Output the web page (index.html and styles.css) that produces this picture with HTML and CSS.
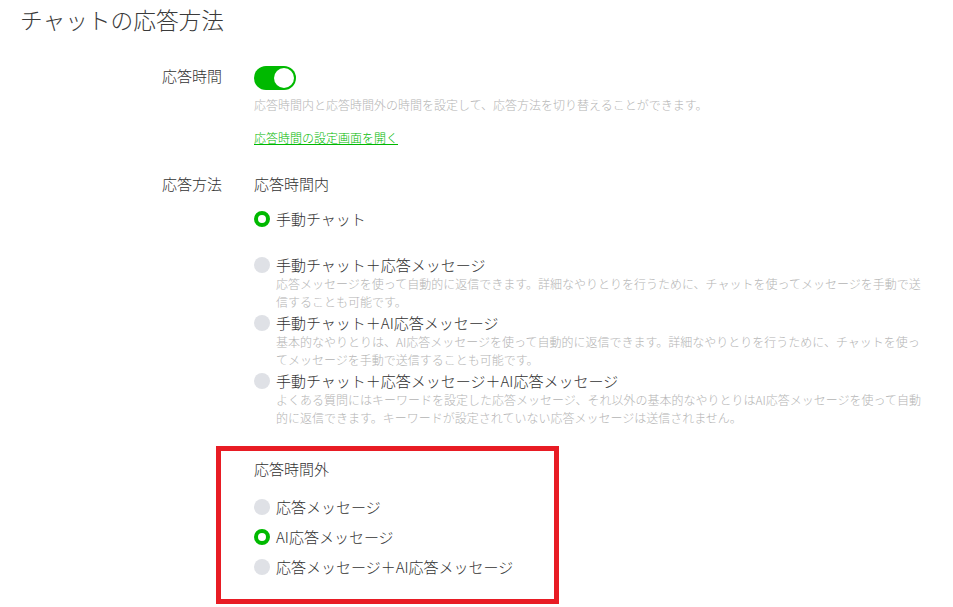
FILE: index.html
```html
<!DOCTYPE html>
<html lang="ja">
<head>
<meta charset="utf-8">
<title>チャットの応答方法</title>
<link rel="stylesheet" href="styles.css">
</head>
<body>
<h1 class="title">チャットの応答方法</h1>
<div class="form">
  <div class="row row-hours">
    <div class="label">応答時間</div>
    <div class="field">
      <div class="toggle"><span class="knob"></span></div>
      <p class="hint">応答時間内と応答時間外の時間を設定して、応答方法を切り替えることができます。</p>
      <a class="link" href="#">応答時間の設定画面を開く</a>
    </div>
  </div>
  <div class="row row-method">
    <div class="label">応答方法</div>
    <div class="field">
      <div class="group">
        <div class="group-title">応答時間内</div>
        <div class="options">
          <div class="option option-first">
            <div class="option-row"><span class="radio checked"></span><span class="option-text">手動チャット</span></div>
          </div>
          <div class="option">
            <div class="option-row"><span class="radio"></span><span class="option-text">手動チャット＋応答メッセージ</span></div>
            <p class="option-desc">応答メッセージを使って自動的に返信できます。詳細なやりとりを行うために、チャットを使ってメッセージを手動で送信することも可能です。</p>
          </div>
          <div class="option">
            <div class="option-row"><span class="radio"></span><span class="option-text">手動チャット＋AI応答メッセージ</span></div>
            <p class="option-desc">基本的なやりとりは、AI応答メッセージを使って自動的に返信できます。詳細なやりとりを行うために、チャットを使ってメッセージを手動で送信することも可能です。</p>
          </div>
          <div class="option">
            <div class="option-row"><span class="radio"></span><span class="option-text">手動チャット＋応答メッセージ＋AI応答メッセージ</span></div>
            <p class="option-desc">よくある質問にはキーワードを設定した応答メッセージ、それ以外の基本的なやりとりはAI応答メッセージを使って自動的に返信できます。キーワードが設定されていない応答メッセージは送信されません。</p>
          </div>
        </div>
      </div>
      <div class="group group-highlight">
        <div class="group-title">応答時間外</div>
        <div class="options options-compact">
          <div class="option-row"><span class="radio"></span><span class="option-text">応答メッセージ</span></div>
          <div class="option-row"><span class="radio checked"></span><span class="option-text">AI応答メッセージ</span></div>
          <div class="option-row"><span class="radio"></span><span class="option-text">応答メッセージ＋AI応答メッセージ</span></div>
        </div>
      </div>
    </div>
  </div>
</div>
</body>
</html>
```
FILE: styles.css
```css
* { box-sizing: border-box; }
html, body {
  margin: 0;
  padding: 0;
  background: #ffffff;
}
body {
  font-family: "Noto Sans CJK JP", "Noto Sans", sans-serif;
  font-weight: 300;
  color: #333333;
  width: 953px;
  height: 607px;
  overflow: hidden;
}
.title {
  margin: 5px 0 0 20px;
  font-size: 22.7px;
  line-height: 30px;
  font-weight: 300;
  color: #3a3a3a;
}
.form {
  display: flex;
  flex-direction: column;
}
.row {
  display: grid;
  grid-template-columns: 222px 672px;
  column-gap: 32px;
}
.row-hours { margin-top: 31px; }
.row-method { margin-top: 26px; }
.label {
  text-align: right;
  font-size: 15px;
  line-height: 20px;
  color: #333333;
}
.row-method .label { line-height: 22px; }
.field {
  display: flex;
  flex-direction: column;
  align-items: flex-start;
}
.toggle {
  width: 42px;
  height: 24px;
  border-radius: 12px;
  background: #00b900;
  display: flex;
  align-items: center;
  justify-content: flex-end;
  padding-right: 2px;
}
.knob {
  width: 20px;
  height: 20px;
  border-radius: 50%;
  background: #ffffff;
}
.hint {
  margin: 6px 0 0;
  font-size: 12px;
  line-height: 18px;
  color: #b4b4b4;
}
.link {
  margin-top: 15px;
  font-size: 12px;
  line-height: 18px;
  color: #00b900;
  text-decoration: underline;
}
.group {
  display: flex;
  flex-direction: column;
}
.group-title {
  font-size: 15px;
  line-height: 22px;
  color: #333333;
}
.options {
  display: flex;
  flex-direction: column;
  margin-top: 14px;
}
.option { margin-bottom: 2px; }
.option-first { margin-bottom: 26px; }
.option-row {
  display: flex;
  align-items: center;
  gap: 6px;
  height: 20px;
}
.radio {
  flex: none;
  width: 16px;
  height: 16px;
  border-radius: 50%;
  background: #dfe1e6;
}
.radio.checked {
  background: #ffffff;
  border: 4px solid #00b900;
}
.option-text {
  font-size: 15px;
  line-height: 20px;
  color: #333333;
}
.option-desc {
  margin: 0 0 0 22px;
  width: 650px;
  font-size: 12px;
  line-height: 18px;
  color: #b4b4b4;
}
.group-highlight {
  margin-top: 17px;
  margin-left: -38px;
  width: 343px;
  padding: 7px 0 22px 33px;
  border: 5px solid #e81c24;
}
.options-compact {
  margin-top: 17px;
  gap: 10px;
}
```
